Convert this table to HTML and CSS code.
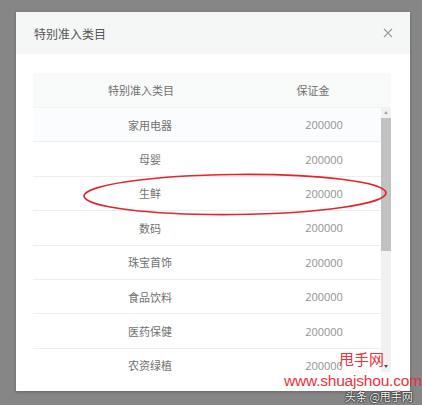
FILE: index.html
```html
<!DOCTYPE html>
<html lang="zh-CN">
<head>
<meta charset="UTF-8" />
<title>特别准入类目</title>
<link rel="stylesheet" href="styles.css">
</head>
<body>

<div class="modal">
  <div class="modal-head">
    <h3>特别准入类目</h3>
    <svg class="close" width="10" height="10" viewBox="0 0 10 10">
      <path d="M1 1L9 9M9 1L1 9" stroke="#9a9a9a" stroke-width="1.1" fill="none"/>
    </svg>
  </div>

  <div class="modal-body">
    <div class="thead">
      <div>特别准入类目</div>
      <div>保证金</div>
    </div>

    <div class="tbody-wrap">
      <div class="tbody">
        <div class="row first"><div>家用电器</div><div>200000</div></div>
        <div class="row"><div>母婴</div><div>200000</div></div>
        <div class="row"><div>生鲜</div><div>200000</div></div>
        <div class="row"><div>数码</div><div>200000</div></div>
        <div class="row"><div>珠宝首饰</div><div>200000</div></div>
        <div class="row"><div>食品饮料</div><div>200000</div></div>
        <div class="row"><div>医药保健</div><div>200000</div></div>
        <div class="row"><div>农资绿植</div><div>200000</div></div>
      </div>
      <!-- fake scrollbar -->
      <div class="scrollbar">
        <span class="arrow up"></span>
        <div class="track"><div class="thumb"></div></div>
        <span class="arrow down"></span>
      </div>
    </div>
  </div>
</div>

<!-- red circle drawn on the screenshot -->
<svg class="mark" width="310" height="46" viewBox="0 0 310 46">
  <ellipse cx="155" cy="22.5" rx="151" ry="20" fill="none" stroke="#e3262e" stroke-width="1.7" transform="rotate(-0.6 155 23)"/>
</svg>

<div class="watermark">
  <div class="wm-name">甩手网</div>
  <div class="wm-url">www.shuajshou.com</div>
  <div class="wm-tt">头条 @甩手网</div>
</div>

</body>
</html>
```

FILE: styles.css
```css
/* --- basics --- */
* {
  margin: 0; padding: 0; box-sizing: border-box;
}
html, body {
  height: 100%;
  overflow: hidden;
}
body {
  background: #868686;
  padding: 12px 12px 14px 16px;
  font-family: "Noto Sans CJK SC", "Noto Sans", sans-serif;
  color: #666;
}

/* --- modal --- */
.modal {
  width: 394px;
  height: 379px;
  background: #fff;
  box-shadow: 0 1px 3px rgba(0,0,0,0.25);
  display: flex;
  flex-direction: column;
}
.modal-head {
  height: 42px;
  background: #f5f6f6;
  display: flex;
  align-items: center;
  justify-content: space-between;
  padding: 0 17px 0 18px;
}
.modal-head h3 {
  font-size: 12px;
  font-weight: normal;
  color: #555;
}

.modal-body {
  padding: 19px 19px 0 17px;
  flex: 1;
}

/* --- table --- */
.thead {
  height: 34px;
  background: #f8f9f9;
  display: grid;
  grid-template-columns: 216px 128px;
  align-items: center;
  text-align: center;
  font-size: 11px;
  color: #707070;
}

.tbody-wrap {
  height: 265px;
  display: flex;
  overflow: hidden;
}
.tbody {
  width: 348px;
}
.row {
  height: 34.4px;
  display: grid;
  grid-template-columns: 234px 1fr;
  align-items: center;
  text-align: center;
  font-size: 11px;
  color: #727272;
  border-top: 1px solid #eeeeee;
}
.row.first {
  background: #fbfcfd;
  border-top-color: #f3f3f3;
}
.row div:last-child {
  color: #929292;
  font-family: "Open Sans", "Noto Sans", sans-serif;
  font-size: 11px;
}

/* --- scrollbar --- */
.scrollbar {
  width: 10px;
  background: #f1f1f1;
  display: flex;
  flex-direction: column;
  align-items: center;
}
.arrow {
  height: 11px;
  width: 10px;
  display: flex;
  align-items: center;
  justify-content: center;
}
.arrow::after {
  content: "";
  border-left: 2.5px solid transparent;
  border-right: 2.5px solid transparent;
}
.arrow.up::after {
  border-bottom: 3px solid #a3a3a3;
}
.arrow.down::after {
  border-top: 3px solid #505050;
}
.track {
  flex: 1;
  width: 10px;
}
.thumb {
  width: 10px;
  height: 133px;
  background: #c1c1c1;
}

/* --- screenshot annotations --- */
.mark {
  position: absolute;
  left: 80px;
  top: 172px;
}
.watermark {
  position: absolute;
  left: 284px;
  top: 350px;
  width: 138px;
}
.wm-name {
  margin-left: 55px;
  font-size: 15px;
  line-height: 18px;
  color: #e8323c;
}
.wm-url {
  font-family: "Liberation Sans", sans-serif;
  font-size: 15.5px;
  line-height: 17px;
  color: #e8323c;
  margin-top: 4px;
  letter-spacing: -0.2px;
}
.wm-tt {
  margin-left: 61px;
  font-size: 11px;
  line-height: 14px;
  color: #fff;
  text-shadow: 0 0 1px #111, 0 0 2px #111, 0 0 1px #111;
}
```
